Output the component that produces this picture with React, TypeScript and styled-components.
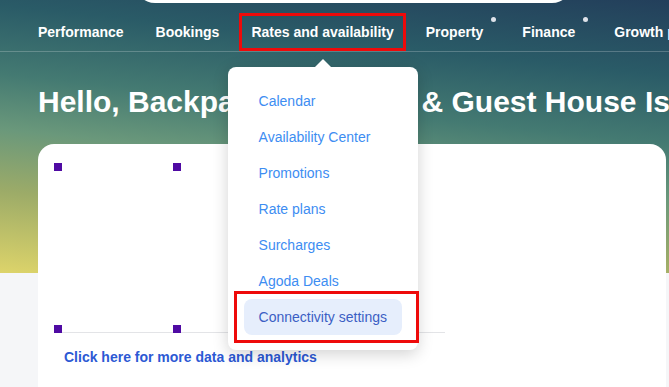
import React from 'react';
import styled, { createGlobalStyle } from 'styled-components';

const GlobalStyle = createGlobalStyle`
  html, body {
    margin: 0;
    padding: 0;
    overflow: hidden;
  }
  body {
    font-family: 'Liberation Sans', Arial, sans-serif;
    background: #f5f6f8;
  }
`;

const navItems = [
  { name: 'Performance' },
  { name: 'Bookings' },
  { name: 'Rates and availability', open: true },
  { name: 'Property', dot: true },
  { name: 'Finance', dot: true },
  { name: 'Growth programs' },
];

const menuItems = ['Calendar', 'Availability Center', 'Promotions', 'Rate plans', 'Surcharges', 'Agoda Deals', 'Connectivity settings'];

const App: React.FC = () => {
  return (
    <>
      <GlobalStyle />
      <Page>
        <Nav>
          <SearchStub />
          {navItems.map((item) => (
            <NavItem key={item.name} marked={!!item.open} dotted={!!item.dot}>
              <NavLabel>
                {item.name}
                {item.dot && <Dot />}
              </NavLabel>
              {item.open && (
                <Dropdown>
                  {menuItems.map((m, i) => (
                    <DropItem key={m} active={i === menuItems.length - 1}>
                      {m}
                    </DropItem>
                  ))}
                </Dropdown>
              )}
            </NavItem>
          ))}
        </Nav>

        <Greeting>Hello, Backpackers Hostel &amp; Guest House Island</Greeting>

        <Card>
          <ChartArea>
            <Plot>
              <Handle x={-8} top />
              <Handle x={111} top />
              <Handle x={-8} />
              <Handle x={111} />
            </Plot>
          </ChartArea>
          <MoreLink>Click here for more data and analytics</MoreLink>
        </Card>
      </Page>
    </>
  );
};

export default App;

export const Page = styled.div`
  width: 669px;
  height: 387px;
  overflow: hidden;
  background:
    linear-gradient(186deg, #233f5b 0%, #2a5b67 22%, #447a72 42%, #6a987b 58%, #9cab68 76%, #ddd46a 100%) top left / 100% 273px no-repeat,
    #f5f6f8;
`;

export const Nav = styled.nav`
  position: relative;
  display: flex;
  padding: 13px 0 0 22px;
  height: 38px;
  border-bottom: 1px solid rgba(255, 255, 255, 0.22);
  white-space: nowrap;
  z-index: 5;
`;

export const SearchStub = styled.div`
  position: absolute;
  left: 135px;
  top: -37px;
  width: 437px;
  height: 40px;
  border-radius: 20px;
  background: #ffffff;
`;

export const NavItem = styled.div<{ marked?: boolean; dotted?: boolean }>`
  position: relative;
  display: flex;
  align-items: center;
  height: 32px;
  padding: 0 9px;
  margin: 0 ${({ dotted }) => (dotted ? '11px' : '4px')} 0 4px;
  border: 3px solid ${({ marked }) => (marked ? '#ee0a0a' : 'transparent')};
  color: #ffffff;
  font-size: 14px;
  font-weight: 700;
  flex-shrink: 0;
`;

export const NavLabel = styled.span`
  position: relative;
`;

export const Dot = styled.span`
  position: absolute;
  right: -13px;
  top: -7px;
  width: 5px;
  height: 5px;
  border-radius: 50%;
  background: #dfe3ea;
`;

export const Dropdown = styled.div`
  position: absolute;
  top: 51px;
  left: 50%;
  transform: translateX(-50%);
  width: 190px;
  padding: 16px 0 15px;
  box-sizing: border-box;
  background: #ffffff;
  border-radius: 8px;
  box-shadow: 0 4px 16px rgba(0, 0, 0, 0.18);

  &::before {
    content: '';
    position: absolute;
    top: -8px;
    left: 50%;
    margin-left: -8px;
    border-left: 8px solid transparent;
    border-right: 8px solid transparent;
    border-bottom: 8px solid #ffffff;
  }
`;

export const DropItem = styled.div<{ active?: boolean }>`
  position: relative;
  display: flex;
  align-items: center;
  height: 36px;
  margin: 0 16px;
  padding: 0 15px;
  border-radius: 8px;
  font-size: 14px;
  font-weight: 400;
  color: ${({ active }) => (active ? '#3b5ec4' : '#3d8df2')};
  background: ${({ active }) => (active ? '#e6eefc' : 'transparent')};

  &::after {
    content: '';
    display: ${({ active }) => (active ? 'block' : 'none')};
    position: absolute;
    top: -8px;
    bottom: -8px;
    left: -10px;
    right: -17px;
    border: 3px solid #ee0a0a;
  }
`;

export const Greeting = styled.h1`
  margin: 32px 0 0 38px;
  font-size: 30px;
  line-height: 36px;
  font-weight: 700;
  color: #ffffff;
  white-space: nowrap;
`;

export const Card = styled.div`
  margin: 24px 3px 0 38px;
  padding: 19px 0 40px 0;
  background: #ffffff;
  border-radius: 16px;
`;

export const ChartArea = styled.div`
  padding-left: 24px;
`;

export const Plot = styled.div`
  position: relative;
  width: 383px;
  height: 169px;
  border-bottom: 1px solid #e3e4e7;
`;

export const Handle = styled.span<{ x: number; top?: boolean }>`
  position: absolute;
  left: ${({ x }) => x}px;
  ${({ top }) => (top ? 'top: 0;' : 'bottom: -1px;')}
  width: 8px;
  height: 8px;
  background: #4f0aa3;
`;

export const MoreLink = styled.a`
  display: block;
  margin: 16px 0 0 26px;
  font-size: 14px;
  line-height: 16px;
  font-weight: 700;
  color: #2c59d4;
  cursor: pointer;
`;
